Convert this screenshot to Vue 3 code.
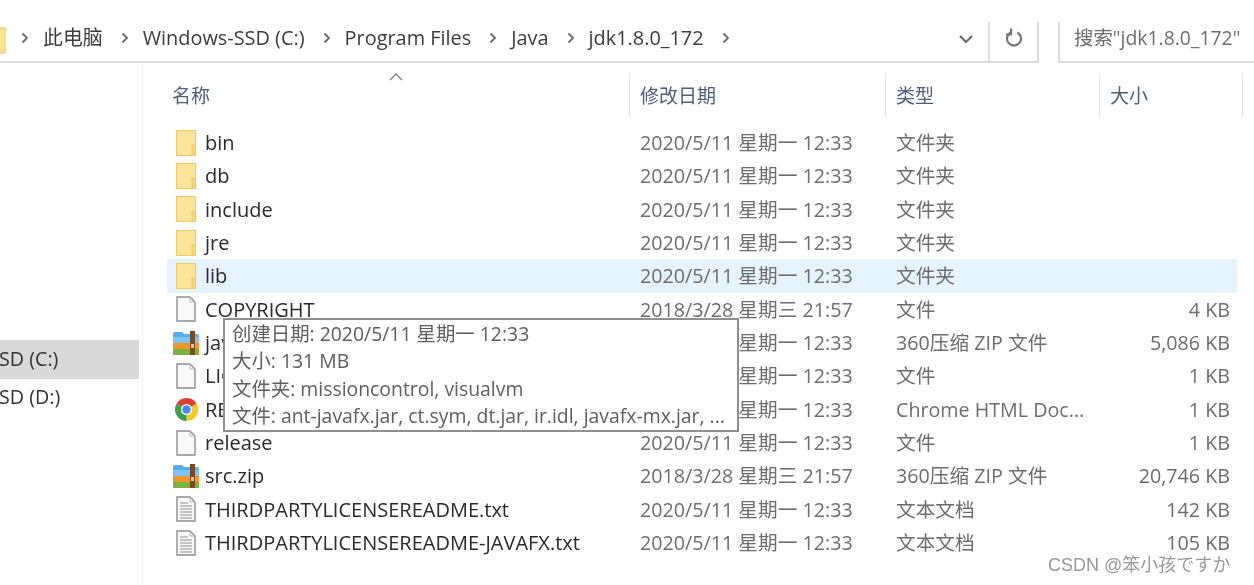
<script setup>
const crumbs = ['此电脑', 'Windows-SSD (C:)', 'Program Files', 'Java', 'jdk1.8.0_172']
const d1 = '2020/5/11 星期一 12:33'
const d2 = '2018/3/28 星期三 21:57'
const rows = [
  { n: 'bin', i: 'folder', d: d1, t: '文件夹', s: '' },
  { n: 'db', i: 'folder', d: d1, t: '文件夹', s: '' },
  { n: 'include', i: 'folder', d: d1, t: '文件夹', s: '' },
  { n: 'jre', i: 'folder', d: d1, t: '文件夹', s: '' },
  { n: 'lib', i: 'folder', d: d1, t: '文件夹', s: '', hover: true },
  { n: 'COPYRIGHT', i: 'file', d: d2, t: '文件', s: '4 KB' },
  { n: 'javafx-src.zip', i: 'zip', d: d1, t: '360压缩 ZIP 文件', s: '5,086 KB' },
  { n: 'LICENSE', i: 'file', d: d1, t: '文件', s: '1 KB' },
  { n: 'README.html', i: 'chrome', d: d1, t: 'Chrome HTML Doc...', s: '1 KB' },
  { n: 'release', i: 'file', d: d1, t: '文件', s: '1 KB' },
  { n: 'src.zip', i: 'zip', d: d2, t: '360压缩 ZIP 文件', s: '20,746 KB' },
  { n: 'THIRDPARTYLICENSEREADME.txt', i: 'txt', d: d1, t: '文本文档', s: '142 KB' },
  { n: 'THIRDPARTYLICENSEREADME-JAVAFX.txt', i: 'txt', d: d1, t: '文本文档', s: '105 KB' },
]
const tips = [
  '创建日期: 2020/5/11 星期一 12:33',
  '大小: 131 MB',
  '文件夹: missioncontrol, visualvm',
  '文件: ant-javafx.jar, ct.sym, dt.jar, ir.idl, javafx-mx.jar, ...',
]
</script>

<template>
  <div class="page">
    <header class="toolbar">
      <div class="address">
        <svg class="crumb-folder" width="6" height="27" viewBox="0 0 6 27"><rect x="-12" y="1" width="17" height="25" fill="#fbe294" stroke="#ecc964"/></svg>
        <template v-for="c in crumbs" :key="c">
          <svg class="chev" width="8" height="12" viewBox="0 0 8 12"><path d="M1.500 1.500 6 6l-4.500 4.500" fill="none" stroke="#6a6a6a" stroke-width="1.800"/></svg>
          <span class="crumb">{{ c }}</span>
        </template>
        <svg class="chev" width="8" height="12" viewBox="0 0 8 12"><path d="M1.500 1.500 6 6l-4.500 4.500" fill="none" stroke="#6a6a6a" stroke-width="1.800"/></svg>
        <svg class="down" width="16" height="10" viewBox="0 0 16 10"><path d="M2 2l6 6 6-6" fill="none" stroke="#6a6a6a" stroke-width="2.200"/></svg>
        <div class="refresh">
          <svg width="18" height="20" viewBox="0 0 18 20"><path d="M5.500 4.500a7 7 0 1 0 7 0" fill="none" stroke="#767676" stroke-width="2.200"/><path d="M6 0.500v6h-5" fill="none" stroke="#767676" stroke-width="2.200"/></svg>
        </div>
      </div>
      <div class="search">搜索"jdk1.8.0_172"</div>
    </header>

    <div class="body">
      <aside class="side">
        <div class="drive selected">SD (C:)</div>
        <div class="drive">SD (D:)</div>
      </aside>

      <main class="list">
        <div class="sort">
          <svg width="14" height="8" viewBox="0 0 14 8"><path d="M1 7l6-6 6 6" fill="none" stroke="#8a8a8a" stroke-width="1.500"/></svg>
        </div>
        <div class="cols head">
          <div class="h first">名称</div>
          <div class="h">修改日期</div>
          <div class="h">类型</div>
          <div class="h">大小</div>
        </div>

        <div v-for="r in rows" :key="r.n" class="cols row" :class="{ hover: r.hover }">
          <div class="name">
            <span class="icon">
              <svg v-if="r.i === 'folder'" width="20" height="26" viewBox="0 0 20 26">
                <rect x=".5" y=".5" width="19" height="25" fill="#fce49b" stroke="#edca62"/>
                <rect x="16" y="15" width="3.500" height="10.500" fill="#f8d873" stroke="#edca62"/>
              </svg>
              <svg v-else-if="r.i === 'file'" width="20" height="26" viewBox="0 0 20 26">
                <path d="M1 1h13l5 5v19H1z" fill="#fafafa" stroke="#8f8f8f" stroke-width="1.400"/>
                <path d="M14 1v5h5" fill="none" stroke="#b5b5b5"/>
              </svg>
              <svg v-else-if="r.i === 'txt'" width="20" height="26" viewBox="0 0 20 26">
                <path d="M1 1h13l5 5v19H1z" fill="#fafafa" stroke="#8f8f8f" stroke-width="1.400"/>
                <path d="M14 1v5h5" fill="none" stroke="#b5b5b5"/>
                <path d="M4 7h8M4 10h12M4 13h12M4 16h12M4 19h12M4 22h12" stroke="#b0b0b0" stroke-width="1.300"/>
              </svg>
              <svg v-else-if="r.i === 'zip'" class="wide" width="26" height="24" viewBox="0 0 26 24">
                <path d="M0 3q0-2 2-2h7l2 2h13q2 0 2 2v8H0z" fill="#55aef0"/>
                <path d="M0 6h26v6H0z" fill="#7cc4f7"/>
                <rect y="12" width="26" height="6" fill="#f2962a"/>
                <rect y="18" width="26" height="6" fill="#77b53c"/>
                <rect x="17" y="0" width="5" height="24" fill="#7a4a1c"/>
                <rect x="18" y="13" width="3" height="4" fill="#d8c7a5"/>
              </svg>
              <svg v-else class="wide" width="23" height="23" viewBox="-12 -12 24 24">
                <path d="M0 0-10.400-6A12 12 0 0 1 10.400-6z" fill="#e0402f"/>
                <path d="M0 0 10.400-6A12 12 0 0 1 0 12z" fill="#f8c91f"/>
                <path d="M0 0 0 12A12 12 0 0 1-10.400-6z" fill="#3aa04a"/>
                <circle r="5.800" fill="#fff"/>
                <circle r="4.400" fill="#4a8af0"/>
              </svg>
            </span>
            <span class="fname">{{ r.n }}</span>
          </div>
          <div class="date">{{ r.d }}</div>
          <div class="type">{{ r.t }}</div>
          <div class="size">{{ r.s }}</div>
        </div>
      </main>
    </div>

    <div class="tip">
      <div v-for="t in tips" :key="t" class="tip-line">{{ t }}</div>
    </div>
    <div class="mark">CSDN @笨小孩ですか</div>
  </div>
</template>

<style>
html, body { margin: 0; background: #fff; }
</style>

<style scoped>
.page {
  position: relative;
  width: 1254px;
  height: 585px;
  overflow: hidden;
  background: #fff;
  font-family: "Open Sans", "Noto Sans CJK SC", sans-serif;
  font-size: 19.700px;
  color: #333;
  filter: blur(0.45px);
}
.toolbar {
  display: flex;
  height: 64px;
  padding-top: 22px;
  box-sizing: border-box;
}
.address {
  width: 1039px;
  display: flex;
  align-items: center;
  border-right: 2px solid #dcdcdc;
  border-bottom: 2px solid #dcdcdc;
  box-sizing: border-box;
  height: 41px;
}
.crumb-folder { margin-right: 15px; margin-bottom: 3px; }
.chev { margin-right: 14px; margin-bottom: 7px; flex: none; }
.crumb {
  margin-right: 18px;
  margin-bottom: 7px;
  white-space: nowrap;
  color: #3c3c3c;
  line-height: 30px;
  font-size: 19.900px;
}
.down { margin-left: auto; margin-right: 14px; margin-bottom: 6px; }
.refresh {
  width: 49px;
  height: 100%;
  border-left: 2px solid #e2e2e2;
  display: flex;
  align-items: center;
  justify-content: center;
  box-sizing: border-box;
  padding-bottom: 7px;
}
.search {
  margin-left: 19px;
  flex: 1;
  height: 41px;
  box-sizing: border-box;
  border-left: 2px solid #dcdcdc;
  border-bottom: 2px solid #dcdcdc;
  padding-left: 14px;
  line-height: 32px;
  font-size: 19.400px;
  color: #6d6d6d;
  white-space: nowrap;
}
.body { display: flex; }
.side {
  width: 142px;
  height: 521px;
  padding-top: 276px;
  box-sizing: border-box;
  flex: none;
}
.drive {
  width: 139px;
  height: 38px;
  line-height: 36px;
  color: #333;
  margin-left: -1px;
}
.selected { background: #d9d9d9; height: 39px; line-height: 37px; width: 140px; }
.list {
  position: relative;
  flex: 1;
  border-left: 1px solid #f1f1f1;
  padding: 10px 17px 0 24px;
}
.sort { position: absolute; left: 246px; top: 9px; line-height: 0; }
.cols {
  display: grid;
  grid-template-columns: 463px 256px 214px 1fr;
}
.head { height: 43px; margin-bottom: 9px; }
.h {
  border-right: 1px solid #e3e3e3;
  padding: 2px 0 0 10px;
  line-height: 41px;
  font-size: 19px;
  color: #4d6079;
  box-sizing: border-box;
}
.h.first { padding-left: 5px; }
.h:last-child { margin-right: -6px; }
.row {
  height: 33.330px;
  align-items: center;
  line-height: 33px;
  white-space: nowrap;
}
.hover { background: #e5f3fe; }
.name { display: flex; align-items: center; }
.icon {
  width: 38px;
  display: flex;
  justify-content: center;
  flex: none;
  line-height: 0;
}
.fname { color: #2a2a2a; font-size: 20px; }
.date { padding-left: 10px; color: #6d6d6d; }
.type { padding-left: 10px; color: #6d6d6d; }
.size { text-align: right; padding-right: 7px; color: #6d6d6d; }
.tip {
  position: absolute;
  left: 223px;
  top: 318px;
  width: 516px;
  height: 114px;
  box-sizing: border-box;
  border: 2px solid #8f8f8f;
  background: #fff;
  padding: 0 0 0 7px;
  font-size: 19.400px;
  color: #5e5e5e;
  white-space: nowrap;
}
.tip-line { height: 27.300px; line-height: 27px; }
.mark {
  position: absolute;
  left: 1048px;
  top: 553px;
  font-family: "Liberation Sans", "Noto Sans CJK SC", sans-serif;
  font-size: 18px;
  line-height: 24px;
  color: #999;
  white-space: nowrap;
}
</style>
